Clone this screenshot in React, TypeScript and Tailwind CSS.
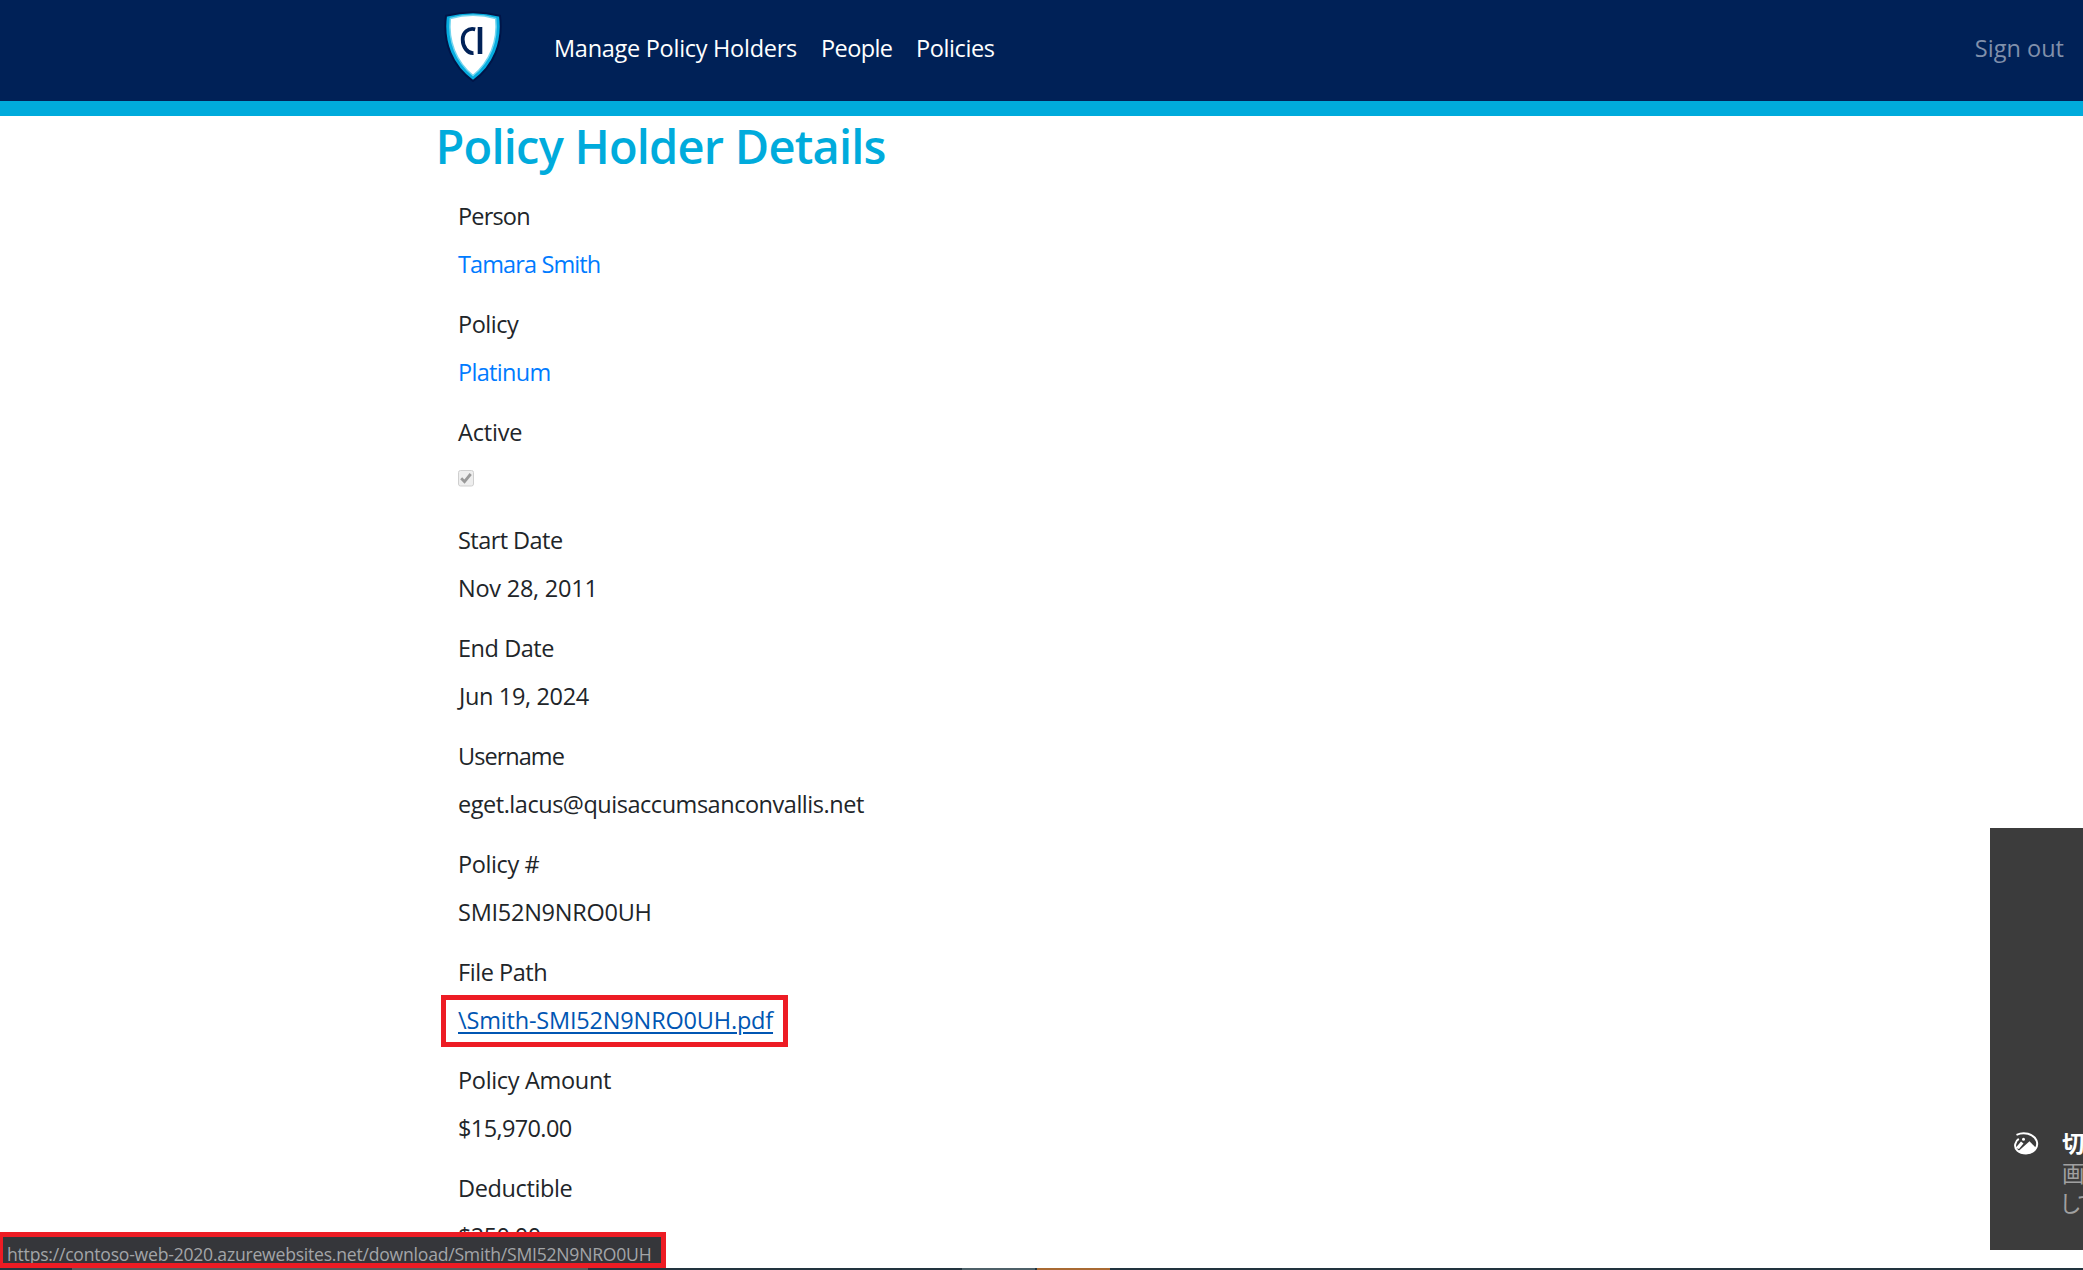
type Row = {
  label: string;
  labelClass: string;
  value: string;
  valueClass: string;
};

const before: Row[] = [
  { label: 'Person', labelClass: 'tracking-[-0.82px]', value: 'Tamara Smith', valueClass: 'tracking-[-0.88px] text-[#007bff]' },
  { label: 'Policy', labelClass: 'tracking-[-0.5px]', value: 'Platinum', valueClass: 'tracking-[-0.68px] text-[#007bff]' },
];

const after: Row[] = [
  { label: 'Start Date', labelClass: 'tracking-[-0.55px]', value: 'Nov 28, 2011', valueClass: 'tracking-[-0.24px]' },
  { label: 'End Date', labelClass: 'tracking-[-0.45px]', value: 'Jun 19, 2024', valueClass: 'pl-px tracking-[-0.35px]' },
  { label: 'Username', labelClass: 'tracking-[-0.96px]', value: 'eget.lacus@quisaccumsanconvallis.net', valueClass: 'tracking-[-0.47px]' },
  { label: 'Policy #', labelClass: 'tracking-[-0.4px]', value: 'SMI52N9NRO0UH', valueClass: 'tracking-[-0.26px]' },
  { label: 'File Path', labelClass: 'tracking-[-0.45px]', value: '\\Smith-SMI52N9NRO0UH.pdf', valueClass: 'tracking-[-0.18px] text-[#0056b3] underline decoration-2 underline-offset-[3px]' },
  { label: 'Policy Amount', labelClass: 'tracking-[-0.32px]', value: '$15,970.00', valueClass: 'tracking-[-0.62px]' },
  { label: 'Deductible', labelClass: 'tracking-[-0.37px]', value: '$250.00', valueClass: 'tracking-[-0.62px]' },
];

function Logo() {
  return (
    <svg width="60" height="76" viewBox="443 8 60 76" className="block">
      <path d="M446 15.800Q473 8.500 500 15.800C503.500 42 494 66 473 81C452 66 442.500 42 446 15.800Z" fill="#06acdf" stroke="#001548" strokeWidth="2" strokeLinejoin="round" />
      <path d="M450.300 18.500Q473 12 495.700 18.500C498 41 490 61.500 473 75.500C456 61.500 448 41 450.300 18.500Z" fill="#fff" stroke="#72d5ef" strokeWidth="1.500" />
      <path d="M475.200 29.300C468 27.500 462.700 32.500 462.700 39.500C462.700 47 467.500 53.500 473.500 53" fill="none" stroke="#002157" strokeWidth="3.800" />
      <path d="M480 27V54" stroke="#002157" strokeWidth="4.600" />
    </svg>
  );
}

function Field({ row }: { row: Row }) {
  const link = row.label === 'File Path';
  return (
    <>
      <dt className={`mb-3 h-9 ${row.labelClass}`}>{row.label}</dt>
      <dd className="relative mb-6 h-9">
        <span className={row.valueClass}>{row.value}</span>
        {link && <span className="absolute -top-[7px] -left-[17px] h-[52px] w-[347px] border-5 border-[#ed1c24]" />}
      </dd>
    </>
  );
}

export default function App() {
  return (
    <div className="relative h-[1270px] w-[2083px] overflow-hidden bg-white font-['Open_Sans','Noto_Sans',sans-serif] text-[23.5px] leading-9 whitespace-nowrap text-[#212529]">
      <header className="flex h-[116px] items-start border-b-15 border-[#00abdc] bg-[#002157] text-white">
        <div className="ml-[443px] pt-2">
          <Logo />
        </div>
        <nav className="flex pt-[30px] pl-[51px]">
          <a className="w-[267px] tracking-[-0.28px]">Manage Policy Holders</a>
          <a className="w-[95px] tracking-[-0.6px]">People</a>
          <a className="tracking-[-0.4px]">Policies</a>
        </nav>
        <a className="mt-[30px] mr-[19px] ml-auto tracking-[0.02px] text-[#8090ab]">Sign out</a>
      </header>

      <main className="pl-[458px]">
        <h1 className="mt-0.5 mb-[23px] -ml-[22.5px] h-[57px] text-[47px] leading-[57px] font-semibold tracking-[-0.8px] text-[#00abdc]">Policy Holder Details</h1>
        <dl>
          {before.map((row) => (
            <Field key={row.label} row={row} />
          ))}
          <dt className="mb-3 h-9 tracking-[-0.2px]">Active</dt>
          <dd className="mb-6 h-9 pt-2">
            <svg width="16" height="17" viewBox="0 0 16 17">
              <rect x=".5" y=".5" width="15" height="15.500" rx="2" fill="#eee" stroke="#cfcfcf" />
              <path d="M3.200 8.300 6.500 11.700 12.700 4" fill="none" stroke="#999" strokeWidth="2.800" />
            </svg>
          </dd>
          {after.map((row) => (
            <Field key={row.label} row={row} />
          ))}
        </dl>
      </main>

      <aside className="absolute top-[828px] left-[1990px] flex h-[422px] w-[93px] overflow-hidden bg-[#3c3c3c] pt-[300px] font-['Noto_Sans_CJK_JP',sans-serif] text-[22.5px] leading-[30px]">
        <svg width="26" height="26" viewBox="0 0 26 26" className="mt-[3px] ml-[23px] shrink-0">
          <path d="M3.500 3.800C11 .6 20 2.500 23.500 9.500C26 16 21 22.500 13 22.500C6 22.500 1 18.500 2.300 13C2.800 10.800 4 9 5.800 7.900" fill="none" stroke="#fff" strokeWidth="2" />
          <path d="M2.500 17 8 10.500 10.500 12.500 6 18Z" fill="#fff" />
          <path d="M5 20.500 16.500 10.200 23.500 17.500C20 23.500 9 24.500 5 20.500Z" fill="#fff" />
          <circle cx="10.500" cy="8.200" r="1.500" fill="#fff" />
        </svg>
        <div className="-mt-px ml-[23px]">
          <div className="font-bold text-white">切</div>
          <div className="text-[#a0a0a0]">画</div>
          <div className="-ml-[3px] tracking-[-4px] text-[#a0a0a0]">して</div>
        </div>
      </aside>

      <div className="absolute bottom-0 left-0 flex h-0.5 w-full bg-[#22343f]">
        <span className="ml-[72px] w-[516px] bg-[#595b5d]" />
        <span className="ml-[374px] w-[73px] bg-[#4d6068]" />
        <span className="ml-0.5 w-[73px] bg-[#a96a33]" />
      </div>

      <div className="absolute top-[1232px] -left-0.5 h-9 w-[668px] overflow-hidden border-5 border-[#ed1c24] bg-[#35363a] pl-1 text-[17.6px] leading-[23px] tracking-[-0.23px] text-[#a3a5a8]">
        <div className="pt-1.5">https://contoso-web-2020.azurewebsites.net/download/Smith/SMI52N9NRO0UH</div>
      </div>
    </div>
  );
}
